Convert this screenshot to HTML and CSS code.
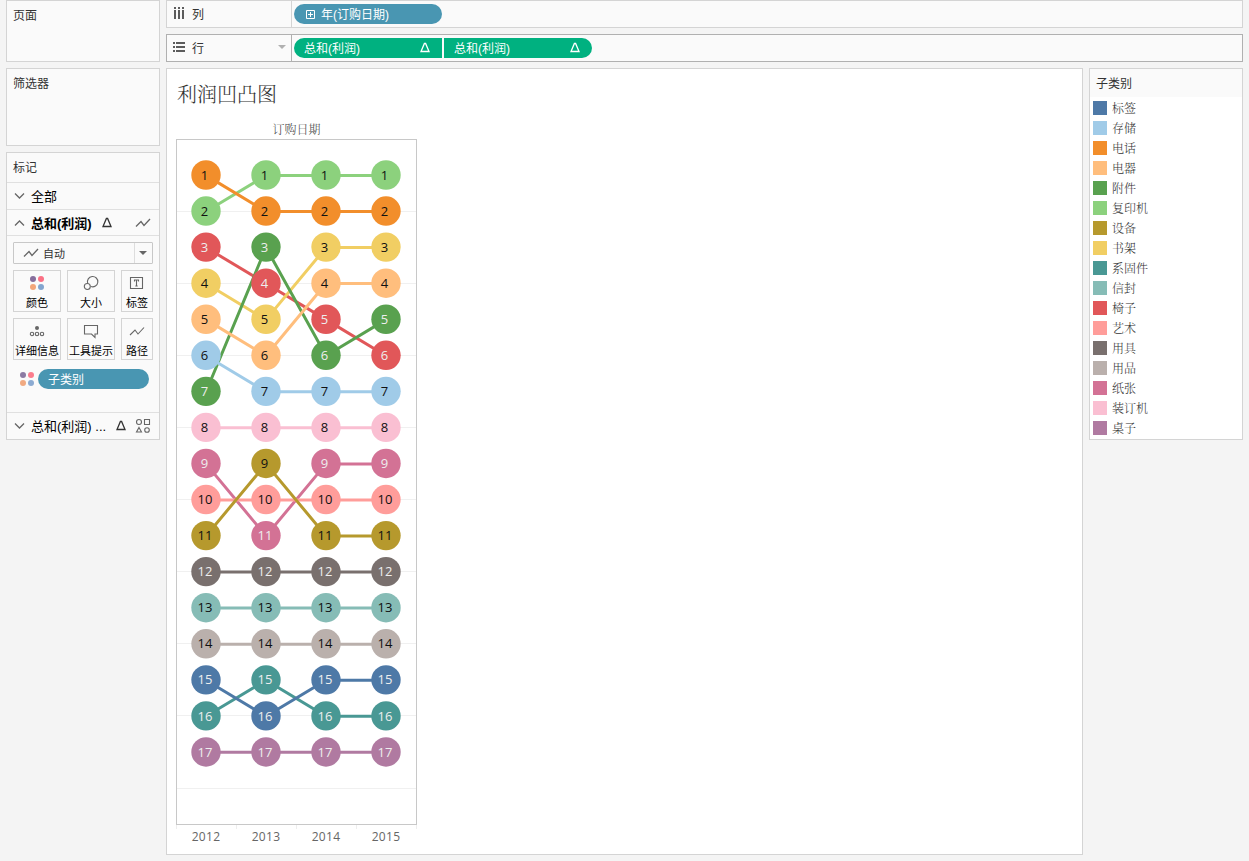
FILE: index.html
```html
<!DOCTYPE html>
<html lang="zh-CN">
<head>
  <meta charset="UTF-8" />
  <meta name="viewport" content="width=device-width, initial-scale=1.0" />
  <title>利润凹凸图</title>
  <link rel="stylesheet" href="styles.css">
</head>
<body>
  <div class="workspace">
    <!-- Left cards -->
    <aside class="sidebar">
      <section class="card pages"><h2>页面</h2></section>
      <section class="card filters"><h2>筛选器</h2></section>
      <section class="card marks">
        <h2>标记</h2>
        <div class="mark-row all">
          <svg class="chevron" width="12" height="8" viewBox="0 0 12 8"><path d="M1 1.500L5.500 6l4.500-4.500" /></svg>
          <span>全部</span>
        </div>
        <div class="mark-row active">
          <svg class="chevron" width="12" height="8" viewBox="0 0 12 8"><path d="M1 6.500L5.500 2l4.500 4.500" /></svg>
          <span>总和(利润)</span>
          <svg class="delta" width="10" height="11" viewBox="0 0 10 11"><path d="M1 9.500h8L5.600 1.500H4.400z" /></svg>
          <svg class="line-icon end" width="16" height="12" viewBox="0 0 16 12"><path d="M1 9.500l5-5 3 4 6-6.500" /></svg>
        </div>
        <div class="mark-body">
          <div class="select">
            <svg class="line-icon" width="16" height="12" viewBox="0 0 16 12"><path d="M1 9.500l5-5 3 4 6-6.500" /></svg>
            <span>自动</span>
            <i class="arrow"></i>
          </div>
          <div class="mark-buttons">
            <button>
              <svg width="16" height="16" viewBox="0 0 16 16"><circle cx="4" cy="4" r="3" fill="#866e9c"/><circle cx="12" cy="4" r="3" fill="#fb7185"/><circle cx="4" cy="12" r="3" fill="#f3a67a"/><circle cx="12" cy="12" r="3" fill="#83a5cf"/></svg>
              颜色
            </button>
            <button>
              <svg class="stroke" width="16" height="16" viewBox="0 0 16 16"><path d="M4.700 8.300A5.200 5.200 0 1 1 8 11.600" /><circle cx="4.300" cy="11.500" r="3" /></svg>
              大小
            </button>
            <button>
              <svg class="stroke" width="16" height="16" viewBox="0 0 16 16"><path d="M1.500 2.500h12v11h-12z" /><path d="M5.500 6.500v-1.500h4v1.500M7.500 5v6M6.300 11h2.400" /></svg>
              标签
            </button>
            <button>
              <svg class="stroke" width="16" height="16" viewBox="0 0 16 16"><circle cx="8" cy="5" r="2" class="dot" /><circle cx="3" cy="11" r="1.700" /><circle cx="8" cy="11" r="1.700" /><circle cx="13" cy="11" r="1.700" /></svg>
              详细信息
            </button>
            <button>
              <svg class="stroke" width="16" height="16" viewBox="0 0 16 16"><path d="M1.500 2.500h13v8.500h-2.500v3.500L8.500 11h-7z" /></svg>
              工具提示
            </button>
            <button>
              <svg class="stroke" width="16" height="16" viewBox="0 0 16 16"><path d="M1 12l5-5 3 4 6-6.500" /></svg>
              路径
            </button>
          </div>
          <div class="encoding">
            <svg width="16" height="16" viewBox="0 0 16 16"><circle cx="4" cy="4" r="3" fill="#8c7ba3"/><circle cx="12" cy="4" r="3" fill="#fb7d8d"/><circle cx="4" cy="12" r="3" fill="#f1aa82"/><circle cx="12" cy="12" r="3" fill="#8cabd2"/></svg>
            <span class="pill blue">子类别</span>
          </div>
        </div>
        <div class="mark-row last">
          <svg class="chevron" width="12" height="8" viewBox="0 0 12 8"><path d="M1 1.500L5.500 6l4.500-4.500" /></svg>
          <span>总和(利润) ...</span>
          <svg class="delta" width="10" height="11" viewBox="0 0 10 11"><path d="M1 9.500h8L5.600 1.500H4.400z" /></svg>
          <svg class="shapes end" width="16" height="16" viewBox="0 0 16 16"><circle cx="4" cy="4" r="2.500" /><path d="M9.500 1.500h5v5h-5zM4 9.500L6.500 14h-5z" /><circle cx="12" cy="12" r="2.300" /></svg>
        </div>
      </section>
    </aside>

    <main class="main">
      <div class="shelf">
        <div class="shelf-name">
          <svg width="12" height="12" viewBox="0 0 12 12"><path d="M1 0h2v2H1zM5 0h2v2H5zM9 0h2v2H9zM1 3h2v9H1zM5 3h2v9H5zM9 3h2v9H9z" /></svg>
          <span>列</span>
        </div>
        <div class="pills">
          <span class="pill blue">
            <svg class="plus" width="9" height="9" viewBox="0 0 9 9"><path d="M.5.500h8v8h-8zM2 4.500h5M4.500 2v5" /></svg>
            年(订购日期)
          </span>
        </div>
      </div>
      <div class="shelf hover">
        <div class="shelf-name">
          <svg width="12" height="12" viewBox="0 0 12 12"><path d="M0 1h2v2H0zM0 5h2v2H0zM0 9h2v2H0zM3 1h9v2H3zM3 5h9v2H3zM3 9h9v2H3z" /></svg>
          <span>行</span>
          <i class="arrow"></i>
        </div>
        <div class="pills">
          <span class="pill green left">总和(利润)
            <svg class="delta" width="10" height="11" viewBox="0 0 10 11"><path d="M1 9.500h8L5.600 1.500H4.400z" /></svg>
          </span>
          <span class="pill green right">总和(利润)
            <svg class="delta" width="10" height="11" viewBox="0 0 10 11"><path d="M1 9.500h8L5.600 1.500H4.400z" /></svg>
          </span>
        </div>
      </div>

      <div class="content">
        <section class="view">
          <h1>利润凹凸图</h1>
          <div class="chart">
            <div class="chart-title">订购日期</div>
            <svg id="plot" width="241" height="693" viewBox="0 0 241 693"></svg>
            <div class="years"><span>2012</span><span>2013</span><span>2014</span><span>2015</span></div>
          </div>
        </section>
        <aside class="legend">
          <h2>子类别</h2>
          <ul id="legend"></ul>
        </aside>
      </div>
    </main>
  </div>
  <script src="script.js"></script>
</body>
</html>
```
FILE: styles.css
```css
* {
  box-sizing: border-box;
}
body {
  margin: 0;
  background: #f4f4f4;
  color: #333;
  font-family: "Liberation Sans", "Noto Sans CJK SC", sans-serif;
  font-size: 12px;
}
h1, h2, ul {
  margin: 0;
  padding: 0;
  font-weight: normal;
}
h2 {
  font-size: 12px;
  line-height: 18px;
}
svg {
  display: block;
  flex: none;
}
.workspace {
  display: flex;
  gap: 6px;
  height: 861px;
  padding: 0 6px;
  overflow: hidden;
}

/* Left cards */
.sidebar {
  display: flex;
  flex-direction: column;
  gap: 6px;
  width: 154px;
}
.card {
  background: #fafafa;
  border: 1px solid #d4d4d4;
}
.card h2 {
  padding: 6px 6px 0;
}
.pages {
  height: 62px;
}
.filters {
  height: 78px;
}
.marks {
  height: 288px;
}
.marks h2 {
  height: 29px;
}
.mark-row {
  display: flex;
  align-items: center;
  height: 27px;
  padding: 0 8px 1px 7px;
  border-top: 1px solid #e0e0e0;
  color: #000;
  font-size: 13px;
  white-space: nowrap;
}
.mark-row span {
  margin-left: 5px;
}
.mark-row.active {
  height: 26px;
  padding-bottom: 0;
  font-weight: bold;
}
.mark-row .delta {
  margin-left: 10px;
}
.mark-row .end {
  margin-left: auto;
}
.chevron, .line-icon, .stroke, .shapes {
  fill: none;
  stroke: #666;
  stroke-width: 1.3;
}
.stroke, .shapes {
  stroke-width: 1.1;
}
.stroke .dot {
  fill: #666;
  stroke: none;
}
.delta {
  fill: none;
  stroke: #333;
  stroke-width: 1.3;
}
.mark-body {
  height: 177px;
  padding: 6px;
  border-top: 1px solid #e0e0e0;
}
.select {
  display: flex;
  align-items: center;
  height: 22px;
  padding-left: 9px;
  border: 1px solid #c8c8c8;
  border-radius: 1px;
  font-size: 11px;
}
.select span {
  margin: -1px 0 0 4px;
}
.arrow {
  width: 0;
  border: 4px solid transparent;
  border-top-color: #b0b0b0;
  border-bottom: 0;
}
.select .arrow {
  position: relative;
  margin: 0 5px 0 auto;
  border-top-color: #666;
}
.select .arrow::before {
  content: "";
  position: absolute;
  left: -9px;
  top: -12px;
  height: 20px;
  border-left: 1px solid #ddd;
}
.mark-buttons {
  display: grid;
  grid-template-columns: 48px 48px 32px;
  grid-auto-rows: 42px;
  gap: 6px;
  margin-top: 6px;
}
.mark-buttons button {
  display: flex;
  flex-direction: column;
  align-items: center;
  gap: 4px;
  padding: 4px 0 0;
  background: #fafafa;
  border: 1px solid #d4d4d4;
  color: #000;
  font: inherit;
  font-size: 11px;
  line-height: 16px;
  white-space: nowrap;
}
.encoding {
  display: flex;
  align-items: center;
  gap: 3px;
  margin: 9px 0 0 6px;
}
.encoding .pill {
  width: 111px;
}

/* Shelves */
.main {
  display: flex;
  flex-direction: column;
  gap: 6px;
  width: 1077px;
}
.shelf {
  display: flex;
  height: 28px;
  background: #fafafa;
  border: 1px solid #d4d4d4;
}
.shelf.hover {
  border-color: #b0b0b0;
}
.shelf-name {
  display: flex;
  align-items: center;
  width: 125px;
  padding: 0 5px 2px 6px;
  border-right: 1px solid #d4d4d4;
}
.hover .shelf-name {
  border-color: #b0b0b0;
}
.shelf-name svg {
  fill: #5c5c5c;
}
.shelf-name span {
  margin-left: 7px;
}
.shelf-name .arrow {
  margin-left: auto;
}
.pills {
  display: flex;
  align-items: center;
  gap: 2px;
  padding: 0 2px;
}
.pill {
  display: flex;
  align-items: center;
  width: 148px;
  height: 20px;
  padding: 0 11px 2px 10px;
  border-radius: 10px;
  color: #fff;
}
.pill .delta {
  margin: 1px 1px 0 auto;
  stroke: #fff;
}
.blue {
  background: #4996b2;
}
.green {
  background: #00b180;
}
.green.left {
  border-radius: 10px 0 0 10px;
}
.green.right {
  border-radius: 0 10px 10px 0;
}
.plus {
  margin: 2px 6px 0 2px;
  fill: none;
  stroke: #fff;
}

/* View and legend */
.content {
  display: flex;
  align-items: flex-start;
  gap: 6px;
}
.view {
  width: 917px;
  height: 787px;
  padding: 10px 9px;
  background: #fff;
  border: 1px solid #d4d4d4;
}
h1 {
  padding-left: 1px;
  font-family: "Noto Serif CJK SC", "Noto Sans CJK SC", sans-serif;
  font-size: 20px;
  font-weight: 300;
  line-height: 30px;
}
.chart {
  width: 241px;
  color: #666;
}
.chart-title {
  height: 30px;
  padding-top: 11px;
  color: #444;
  font-family: "Noto Serif CJK SC", "Noto Sans CJK SC", sans-serif;
  font-weight: 300;
  line-height: 17px;
  text-align: center;
}
.years {
  display: grid;
  grid-template-columns: repeat(4, 60px);
  margin-top: -3px;
  font: 12px/16px "Open Sans", sans-serif;
  letter-spacing: 0.3px;
  text-align: center;
}
.mark-label {
  font: 13px "Open Sans", sans-serif;
  text-anchor: middle;
}
.legend {
  width: 154px;
  height: 372px;
  background: #fff;
  border: 1px solid #d4d4d4;
}
.legend h2 {
  height: 28px;
  padding: 6px 6px 0;
  background: #fafafa;
}
.legend ul {
  list-style: none;
}
.legend li {
  display: flex;
  align-items: center;
  gap: 5px;
  height: 20px;
  padding: 1px 3px 0;
  color: #333;
  font-family: "Noto Serif CJK SC", "Noto Sans CJK SC", sans-serif;
  font-weight: 300;
}
.swatch {
  width: 14px;
  height: 14px;
}
```
FILE: script.js
```js
// name, color, label color, rank for each year
const series = [
  ['标签', '#4e79a7', '#eee', [15, 16, 15, 15]],
  ['存储', '#a0cbe8', '#111', [6, 7, 7, 7]],
  ['电话', '#f28e2b', '#111', [1, 2, 2, 2]],
  ['电器', '#ffbe7d', '#111', [5, 6, 4, 4]],
  ['附件', '#59a14f', '#eee', [7, 3, 6, 5]],
  ['复印机', '#8cd17d', '#111', [2, 1, 1, 1]],
  ['设备', '#b6992d', '#111', [11, 9, 11, 11]],
  ['书架', '#f1ce63', '#111', [4, 5, 3, 3]],
  ['系固件', '#499894', '#eee', [16, 15, 16, 16]],
  ['信封', '#86bcb6', '#111', [13, 13, 13, 13]],
  ['椅子', '#e15759', '#eee', [3, 4, 5, 6]],
  ['艺术', '#ff9d9a', '#111', [10, 10, 10, 10]],
  ['用具', '#79706e', '#eee', [12, 12, 12, 12]],
  ['用品', '#bab0ac', '#111', [14, 14, 14, 14]],
  ['纸张', '#d37295', '#eee', [9, 11, 9, 9]],
  ['装订机', '#fabfd2', '#111', [8, 8, 8, 8]],
  ['桌子', '#b07aa1', '#eee', [17, 17, 17, 17]]
];

const x = i => 30 + i * 60;
const y = rank => 36 + (rank - 1) * 36.06;

let grid = '';
for (let rank = 2; rank <= 18; rank += 2) {
  const gy = Math.floor(y(rank)) + 0.5;
  grid += `<path d="M1 ${gy}H240" stroke="#f0f0f0"/>`;
}
for (let i = 0; i <= 4; i++) {
  grid += `<path d="M${i * 60 + 0.5} 686v4" stroke="#eee"/>`;
}

let lines = '';
let marks = '';
// the first series goes on top
[...series].reverse().forEach(([name, color, text, ranks]) => {
  const points = ranks.map((rank, i) => `${x(i)},${y(rank) + 0.4}`).join(' ');
  lines += `<polyline points="${points}" fill="none" stroke="${color}" stroke-width="3"/>`;
  ranks.forEach((rank, i) => {
    const dx = rank < 10 ? 1.5 : 1;
    marks += `<circle cx="${x(i)}" cy="${y(rank)}" r="14.7" fill="${color}"/>`;
    marks += `<text class="mark-label" x="${x(i) - dx}" y="${y(rank) + 4.6}" fill="${text}">${rank}</text>`;
  });
});

document.getElementById('plot').innerHTML = grid + lines + marks +
  '<rect x="0.5" y="0.5" width="240" height="685" fill="none" stroke="#c8c8c8"/>';

document.getElementById('legend').innerHTML = series.map(([name, color]) =>
  `<li><span class="swatch" style="background:${color}"></span>${name}</li>`).join('');
```
